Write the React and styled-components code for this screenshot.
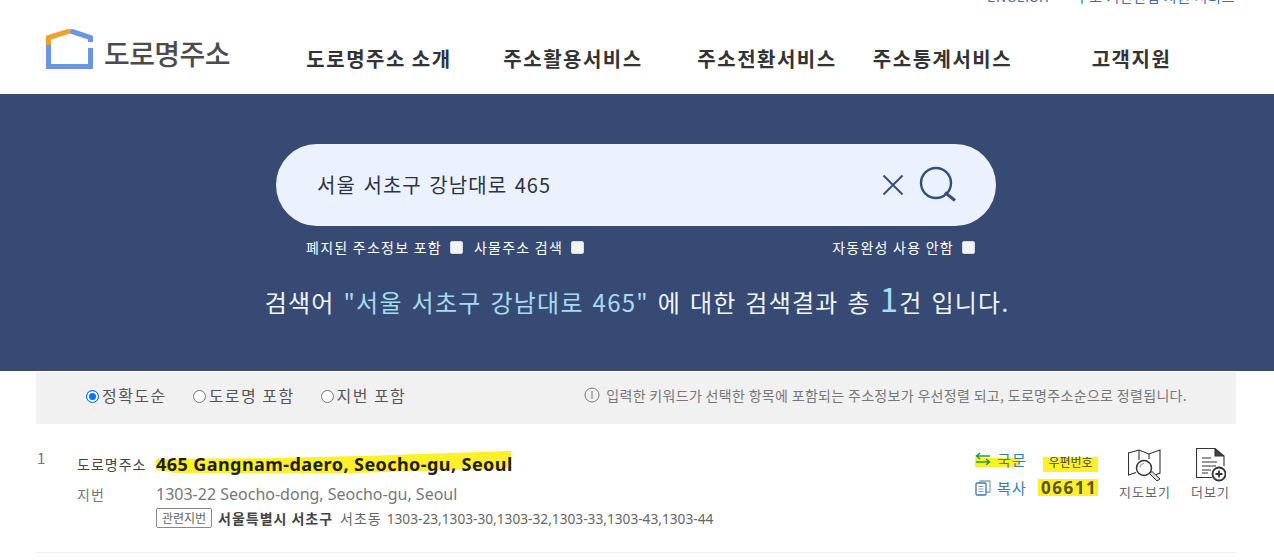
import React from "react";
import styled, { createGlobalStyle } from "styled-components";

const GlobalStyle = createGlobalStyle`
  html, body { margin: 0; padding: 0; background: #fff; overflow: hidden; }
  body { font-family: "Noto Sans CJK KR", "Noto Sans", sans-serif; }
  * { box-sizing: border-box; }
`;

const Page = styled.div`
  width: 1274px;
  height: 560px;
  overflow: hidden;
`;

const Header = styled.header`
  height: 94px;
  overflow: hidden;
`;

const TopLinks = styled.div`
  display: flex;
  justify-content: flex-end;
  gap: 26px;
  height: 4px;
  padding-right: 39px;
  margin-top: -10px;
  font-size: 14px;
  line-height: 13px;
  letter-spacing: 0.6px;
  color: #3d6ea5;
`;

const HeaderRow = styled.div`
  display: flex;
  align-items: flex-start;
  padding: 35px 0 0 46px;
`;

const Logo = styled.div`
  display: flex;
  align-items: flex-start;
  gap: 11px;
  width: 236px;
`;

const LogoText = styled.span`
  margin-top: 6px;
  font-size: 28px;
  font-weight: 500;
  line-height: 36px;
  letter-spacing: -0.6px;
  color: #4b4b4b;
`;

const Nav = styled.nav`
  display: flex;
`;

const NavItem = styled.a`
  width: ${(p) => p.$w}px;
  margin-top: 16px;
  text-align: center;
  font-size: 20px;
  font-weight: 700;
  line-height: 28px;
  letter-spacing: 1.5px;
  color: #333;
  white-space: nowrap;
`;

const Hero = styled.section`
  height: 277px;
  background: #364a74;
  display: flex;
  flex-direction: column;
  align-items: center;
  padding: 50px 2px 0 0;
`;

const SearchBox = styled.div`
  width: 720px;
  height: 82px;
  border-radius: 41px;
  background: #ecf2fd;
  display: flex;
  align-items: center;
  padding: 0 39px 0 41px;
`;

const SearchText = styled.span`
  flex: 1;
  font-size: 20px;
  line-height: 30px;
  color: #2b3346;
  letter-spacing: 1.05px;
  word-spacing: 2px;
`;

const SearchIcons = styled.div`
  display: flex;
  align-items: center;
  gap: 14px;
`;

const OptionRow = styled.div`
  width: 720px;
  height: 21px;
  margin-top: 10px;
  padding: 0 21px 0 30px;
  display: flex;
  align-items: center;
`;

const OptionLabel = styled.label`
  display: flex;
  align-items: center;
  gap: 8px;
  font-size: 14px;
  line-height: 20px;
  letter-spacing: 1.25px;
  color: #fff;
  margin-right: ${(p) => p.$mr || 0}px;
  margin-left: ${(p) => (p.$push ? "auto" : "0")};
`;

const CheckMark = styled.span`
  width: 13px;
  height: 13px;
  margin-top: 2px;
  border-radius: 2px;
  background: #f3f3f3;
  border: 1px solid #d8d8d8;
`;

const ResultLine = styled.p`
  margin: 26px 0 0 2px;
  font-size: 24px;
  line-height: 36px;
  letter-spacing: 1.25px;
  word-spacing: 2.2px;
  color: #f2f6fb;
  white-space: nowrap;
`;

const Keyword = styled.span`
  color: #a5dcf2;
`;

const Count = styled.strong`
  font-size: 33px;
  font-weight: 400;
  color: #a5dcf2;
  line-height: 30px;
`;

const FilterBar = styled.div`
  margin: 1px 38px 0 36px;
  height: 52px;
  background: #f1f1f1;
  display: flex;
  align-items: center;
  padding: 0 49px 6px 50px;
`;

const RadioLabel = styled.label`
  display: flex;
  align-items: center;
  gap: 3px;
  font-size: 16px;
  line-height: 20px;
  letter-spacing: 1.45px;
  color: #555;
  margin-right: ${(p) => p.$mr}px;
`;

const RadioDot = styled.span`
  width: 13px;
  height: 13px;
  border-radius: 50%;
  margin-top: 2px;
  border: 1px solid ${(p) => (p.$on ? "#0075ff" : "#767676")};
  background: ${(p) => (p.$on ? "#0075ff" : "#fff")};
  box-shadow: ${(p) => (p.$on ? "inset 0 0 0 2px #fff" : "none")};
`;

const FilterNote = styled.div`
  margin-left: auto;
  display: flex;
  align-items: center;
  gap: 6px;
  font-size: 14px;
  line-height: 18px;
  color: #777;
  letter-spacing: 0.32px;
  white-space: nowrap;
`;

const ResultRow = styled.article`
  margin: 0 38px 0 36px;
  height: 129px;
  border-bottom: 1px solid #eee;
  display: flex;
  padding-top: 24px;
`;

const RowIndex = styled.span`
  width: 41px;
  padding-left: 1px;
  font-size: 15px;
  line-height: 20px;
  color: #777;
`;

const AddressCol = styled.div`
  flex: 1;
  display: flex;
  flex-direction: column;
`;

const AddressLine = styled.div`
  display: flex;
  align-items: center;
  height: ${(p) => p.$h}px;
`;

const AddressLabel = styled.span`
  width: 79px;
  font-size: 14px;
  letter-spacing: 1px;
  color: ${(p) => p.$color};
`;

const MainAddress = styled.strong`
  position: relative;
  font-family: "Noto Sans", sans-serif;
  font-size: 18px;
  font-weight: 700;
  color: #1d1d1d;
  letter-spacing: 0.43px;
`;

const Marker = styled.svg`
  position: absolute;
  left: 0;
  top: -4px;
  width: 356px;
  height: 30px;
`;

const MarkerText = styled.span`
  position: relative;
`;

const SubAddress = styled.span`
  font-family: "Noto Sans", sans-serif;
  font-size: 16px;
  color: #777;
`;

const RelatedLine = styled.div`
  display: flex;
  align-items: center;
  margin-left: 79px;
  font-size: 14px;
  letter-spacing: 1px;
  color: #555;
  white-space: nowrap;
`;

const Tag = styled.span`
  height: 20px;
  width: 56px;
  margin-right: 6px;
  border: 1px solid #888;
  border-radius: 2px;
  text-align: center;
  font-size: 12px;
  line-height: 17px;
  letter-spacing: 0;
  color: #666;
`;

const Region = styled.span`
  margin-right: ${(p) => p.$mr}px;
  font-weight: ${(p) => (p.$bold ? 700 : 400)};
  color: ${(p) => (p.$bold ? "#444" : "#666")};
`;

const RelatedNumbers = styled.span`
  font-family: "Noto Sans", sans-serif;
  font-size: 13.7px;
  letter-spacing: 0;
  color: #666;
`;

const Actions = styled.div`
  display: flex;
`;

const LinkCol = styled.div`
  display: grid;
  grid-template-columns: 66px 57px;
  grid-template-rows: 22px 35px;
  align-items: center;
  margin-right: 7px;
`;

const ActionLink = styled.a`
  display: flex;
  align-items: center;
  gap: 6px;
  font-size: 15px;
  letter-spacing: 1.2px;
  color: #3a7cb0;
  background: ${(p) => (p.$mark ? "linear-gradient(#fff02a, #fff02a) 0 9px / 45px 9px no-repeat" : "none")};
`;

const ZipLabel = styled.span`
  align-self: start;
  justify-self: end;
  width: 55px;
  margin-top: 9px;
  padding-bottom: 5px;
  text-align: center;
  font-size: 12px;
  line-height: 10px;
  color: #4a4a2a;
  background: #fff02a;
`;

const ZipCode = styled.span`
  justify-self: end;
  width: 60px;
  padding-left: 3px;
  font-family: "Noto Sans", sans-serif;
  font-size: 17px;
  font-weight: 700;
  line-height: 17px;
  letter-spacing: 1.5px;
  color: #56562a;
  background: #fff02a;
`;

const ToolButton = styled.a`
  width: ${(p) => p.$w}px;
  display: flex;
  flex-direction: column;
  align-items: center;
  gap: 1px;
  font-size: 13px;
  line-height: 18px;
  letter-spacing: 1px;
  color: #666;
  white-space: nowrap;
`;

function LogoMark() {
  return (
    <svg width="47" height="40" viewBox="0 0 47 40" fill="none">
      <path d="M2.5 16V37.5H44.5V19" stroke="#6a97e0" strokeWidth="5" />
      <path d="M44.5 13V8.5L24 1.8" stroke="#6a97e0" strokeWidth="5" />
      <path d="M2.5 16V8.5L24 1.8" stroke="#f0a030" strokeWidth="5" />
    </svg>
  );
}

function ClearIcon() {
  return (
    <svg width="24" height="24" viewBox="0 0 24 24" fill="none" stroke="#34507f" strokeWidth="2">
      <path d="M2.5 2.5L21.5 21.5M21.5 2.5L2.5 21.5" />
    </svg>
  );
}

function SearchIcon() {
  return (
    <svg width="38" height="38" viewBox="0 0 38 38" fill="none" stroke="#34507f" strokeWidth="2.4">
      <circle cx="17" cy="17" r="15" />
      <path d="M26 26.5L36 34.5" strokeWidth="3" />
    </svg>
  );
}

function InfoIcon() {
  return (
    <svg width="16" height="16" viewBox="0 0 16 16" fill="none" stroke="#777" strokeWidth="1">
      <circle cx="8" cy="8" r="7" />
      <path d="M8 4V12" />
    </svg>
  );
}

function SwapIcon() {
  return (
    <svg width="16" height="14" viewBox="0 0 16 14" fill="none" stroke="#2a9a44" strokeWidth="1.6">
      <path d="M15 4H1.5M5 1L1.5 4L5 7" />
      <path d="M1 10H14.5M11 7L14.5 10L11 13" />
    </svg>
  );
}

function CopyIcon() {
  return (
    <svg width="16" height="16" viewBox="0 0 16 16" fill="none" stroke="#3a7cb0" strokeWidth="1.3">
      <path d="M5 3V1H15V12H11" stroke="#8aa" />
      <rect x="1" y="3" width="10" height="12" rx="1" />
      <path d="M3.5 6.5H8.5M3.5 9H8.5M3.5 11.5H8.5" stroke="#99a" strokeWidth="1" />
    </svg>
  );
}

function MapIcon() {
  return (
    <svg width="34" height="34" viewBox="0 0 34 34" fill="none" stroke="#333" strokeWidth="1.1">
      <path d="M8 24.5L0.5 27V5L11 2L21 6L32 2V25L28 26.5" />
      <path d="M11 2V12M21 6V11" />
      <circle cx="16" cy="20" r="7.5" strokeWidth="1.5" />
      <path d="M12 19.5A4.5 4.5 0 0 1 16 15.5" stroke="#999" />
      <path d="M21.5 25.5L29 33L32 31L24 23.5Z" fill="#ddd" strokeWidth="1" />
    </svg>
  );
}

function MoreIcon() {
  return (
    <svg width="30" height="34" viewBox="0 0 30 34" fill="none" stroke="#333" strokeWidth="1.1">
      <path d="M16 29.5H0.5V0.5H19L28 8V18" />
      <path d="M19 1V8H27L19 1Z" fill="#444" />
      <path d="M6 10H15M6 14H21M6 18H20M6 22H15M6 25H12" />
      <circle cx="23" cy="26" r="6.5" strokeWidth="1.8" fill="#fff" />
      <path d="M23 22.5V29.5M19.5 26H26.5" strokeWidth="1.8" />
    </svg>
  );
}

const navItems = [
  { label: "도로명주소 소개", w: 194 },
  { label: "주소활용서비스", w: 194 },
  { label: "주소전환서비스", w: 194 },
  { label: "주소통계서비스", w: 157 },
  { label: "고객지원", w: 221 },
];

export default function App() {
  return (
    <Page>
      <GlobalStyle />
      <Header>
        <TopLinks>
          <span>ENGLISH</span>
          <span>주소 기반산업 지원 서비스</span>
        </TopLinks>
        <HeaderRow>
          <Logo>
            <LogoMark />
            <LogoText>도로명주소</LogoText>
          </Logo>
          <Nav>
            {navItems.map((item) => (
              <NavItem key={item.label} $w={item.w}>{item.label}</NavItem>
            ))}
          </Nav>
        </HeaderRow>
      </Header>

      <Hero>
        <SearchBox>
          <SearchText>서울 서초구 강남대로 465</SearchText>
          <SearchIcons>
            <ClearIcon />
            <SearchIcon />
          </SearchIcons>
        </SearchBox>
        <OptionRow>
          <OptionLabel $mr={11}>폐지된 주소정보 포함 <CheckMark /></OptionLabel>
          <OptionLabel>사물주소 검색 <CheckMark /></OptionLabel>
          <OptionLabel $push>자동완성 사용 안함 <CheckMark /></OptionLabel>
        </OptionRow>
        <ResultLine>
          검색어 <Keyword>"서울 서초구 강남대로 465"</Keyword> 에 대한 검색결과 총 <Count>1</Count>건 입니다.
        </ResultLine>
      </Hero>

      <FilterBar>
        <RadioLabel $mr={26}><RadioDot $on />정확도순</RadioLabel>
        <RadioLabel $mr={26}><RadioDot />도로명 포함</RadioLabel>
        <RadioLabel $mr={0}><RadioDot />지번 포함</RadioLabel>
        <FilterNote>
          <InfoIcon />
          입력한 키워드가 선택한 항목에 포함되는 주소정보가 우선정렬 되고, 도로명주소순으로 정렬됩니다.
        </FilterNote>
      </FilterBar>

      <ResultRow>
        <RowIndex>1</RowIndex>
        <AddressCol>
          <AddressLine $h={32}>
            <AddressLabel $color="#444">도로명주소</AddressLabel>
            <MainAddress>
              <Marker viewBox="0 0 356 30" preserveAspectRatio="none">
                <path d="M0 11L120 10L207 8L355 3V20L200 25L20 25L0 22Z" fill="#fff02a" />
              </Marker>
              <MarkerText>465 Gangnam-daero, Seocho-gu, Seoul</MarkerText>
            </MainAddress>
          </AddressLine>
          <AddressLine $h={28}>
            <AddressLabel $color="#777">지번</AddressLabel>
            <SubAddress>1303-22 Seocho-dong, Seocho-gu, Seoul</SubAddress>
          </AddressLine>
          <RelatedLine>
            <Tag>관련지번</Tag>
            <Region $bold $mr={4}>서울특별시</Region>
            <Region $bold $mr={7}>서초구</Region>
            <Region $mr={5}>서초동</Region>
            <RelatedNumbers>1303-23,1303-30,1303-32,1303-33,1303-43,1303-44</RelatedNumbers>
          </RelatedLine>
        </AddressCol>
        <Actions>
          <LinkCol>
            <ActionLink $mark><SwapIcon />국문</ActionLink>
            <ZipLabel>우편번호</ZipLabel>
            <ActionLink><CopyIcon />복사</ActionLink>
            <ZipCode>06611</ZipCode>
          </LinkCol>
          <ToolButton $w={80}><MapIcon />지도보기</ToolButton>
          <ToolButton $w={51}><MoreIcon />더보기</ToolButton>
        </Actions>
      </ResultRow>
    </Page>
  );
}
